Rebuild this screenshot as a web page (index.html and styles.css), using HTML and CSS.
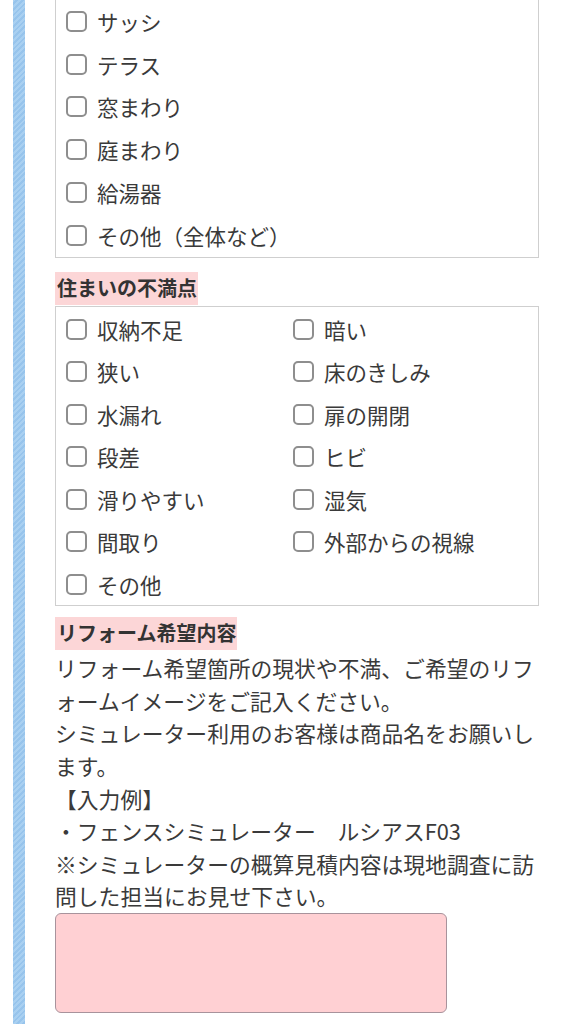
FILE: index.html
```html
<!DOCTYPE html>
<html lang="ja">
<head>
<meta charset="utf-8">
<title>リフォーム</title>
<link rel="stylesheet" href="styles.css">
</head>
<body>
<div class="page">
  <div class="stripe"></div>
  <main class="form">
    <div class="box box--cut">
      <label class="item"><span class="check"></span>サッシ</label>
      <label class="item"><span class="check"></span>テラス</label>
      <label class="item"><span class="check"></span>窓まわり</label>
      <label class="item"><span class="check"></span>庭まわり</label>
      <label class="item"><span class="check"></span>給湯器</label>
      <label class="item"><span class="check"></span>その他（全体など）</label>
    </div>

    <h2 class="heading heading--first"><span class="heading-text">住まいの不満点</span></h2>
    <div class="box box--grid">
      <label class="item"><span class="check"></span>収納不足</label>
      <label class="item"><span class="check"></span>暗い</label>
      <label class="item"><span class="check"></span>狭い</label>
      <label class="item"><span class="check"></span>床のきしみ</label>
      <label class="item"><span class="check"></span>水漏れ</label>
      <label class="item"><span class="check"></span>扉の開閉</label>
      <label class="item"><span class="check"></span>段差</label>
      <label class="item"><span class="check"></span>ヒビ</label>
      <label class="item"><span class="check"></span>滑りやすい</label>
      <label class="item"><span class="check"></span>湿気</label>
      <label class="item"><span class="check"></span>間取り</label>
      <label class="item"><span class="check"></span>外部からの視線</label>
      <label class="item"><span class="check"></span>その他</label>
    </div>

    <h2 class="heading heading--second"><span class="heading-text">リフォーム希望内容</span></h2>
    <p class="note">リフォーム希望箇所の現状や不満、ご希望のリフ<br>ォームイメージをご記入ください。<br>シミュレーター利用のお客様は商品名をお願いし<br>ます。<br>【入力例】<br>・フェンスシミュレーター　ルシアスF03<br>※シミュレーターの概算見積内容は現地調査に訪<br>問した担当にお見せ下さい。</p>
    <textarea class="textarea"></textarea>
  </main>
</div>
</body>
</html>
```

FILE: styles.css
```css
html, body {
  margin: 0;
  padding: 0;
  background: #ffffff;
}

body {
  font-family: "Noto Sans CJK JP", "Noto Sans", sans-serif;
  color: #3a3a3a;
}

.page {
  display: flex;
  min-height: 1024px;
  padding-left: 13px;
  overflow: hidden;
}

.stripe {
  flex: 0 0 12px;
  background: repeating-linear-gradient(135deg, #a9d0f1 0 2px, #97c4ec 2px 4px);
}

.form {
  width: 484px;
  margin-left: 30px;
}

.box {
  border: 1px solid #cfcfcf;
  padding: 1px 10px 0;
}

.box--cut {
  border-top: 0;
  padding-top: 0;
}

.box--cut .item {
  height: 42.8px;
}

.box--grid {
  display: grid;
  grid-template-columns: 227px 227px;
}

.item {
  display: flex;
  align-items: center;
  height: 42.5px;
  font-size: 21.5px;
  white-space: nowrap;
}

.check {
  box-sizing: border-box;
  flex: 0 0 21px;
  width: 21px;
  height: 21px;
  border: 2px solid #8e8e8e;
  border-radius: 5px;
  margin-right: 10px;
  background: #fff;
}

.heading {
  margin: 0;
  font-size: 20px;
  font-weight: 700;
  line-height: 32px;
  color: #333;
}

.heading--first {
  margin-top: 14px;
  margin-bottom: 1px;
}

.heading--second {
  margin-top: 11px;
  margin-bottom: 2px;
}

.heading-text {
  display: inline-block;
  background: #fcd6d7;
  padding: 0 1px 1px 2px;
}

.note {
  margin: 0;
  font-size: 21.8px;
  line-height: 32.6px;
  white-space: nowrap;
}

.textarea {
  display: block;
  box-sizing: border-box;
  width: 392px;
  height: 100px;
  margin: 0;
  background: #ffd0d3;
  border: 1px solid #a8939c;
  border-radius: 6px;
  resize: none;
}
```
